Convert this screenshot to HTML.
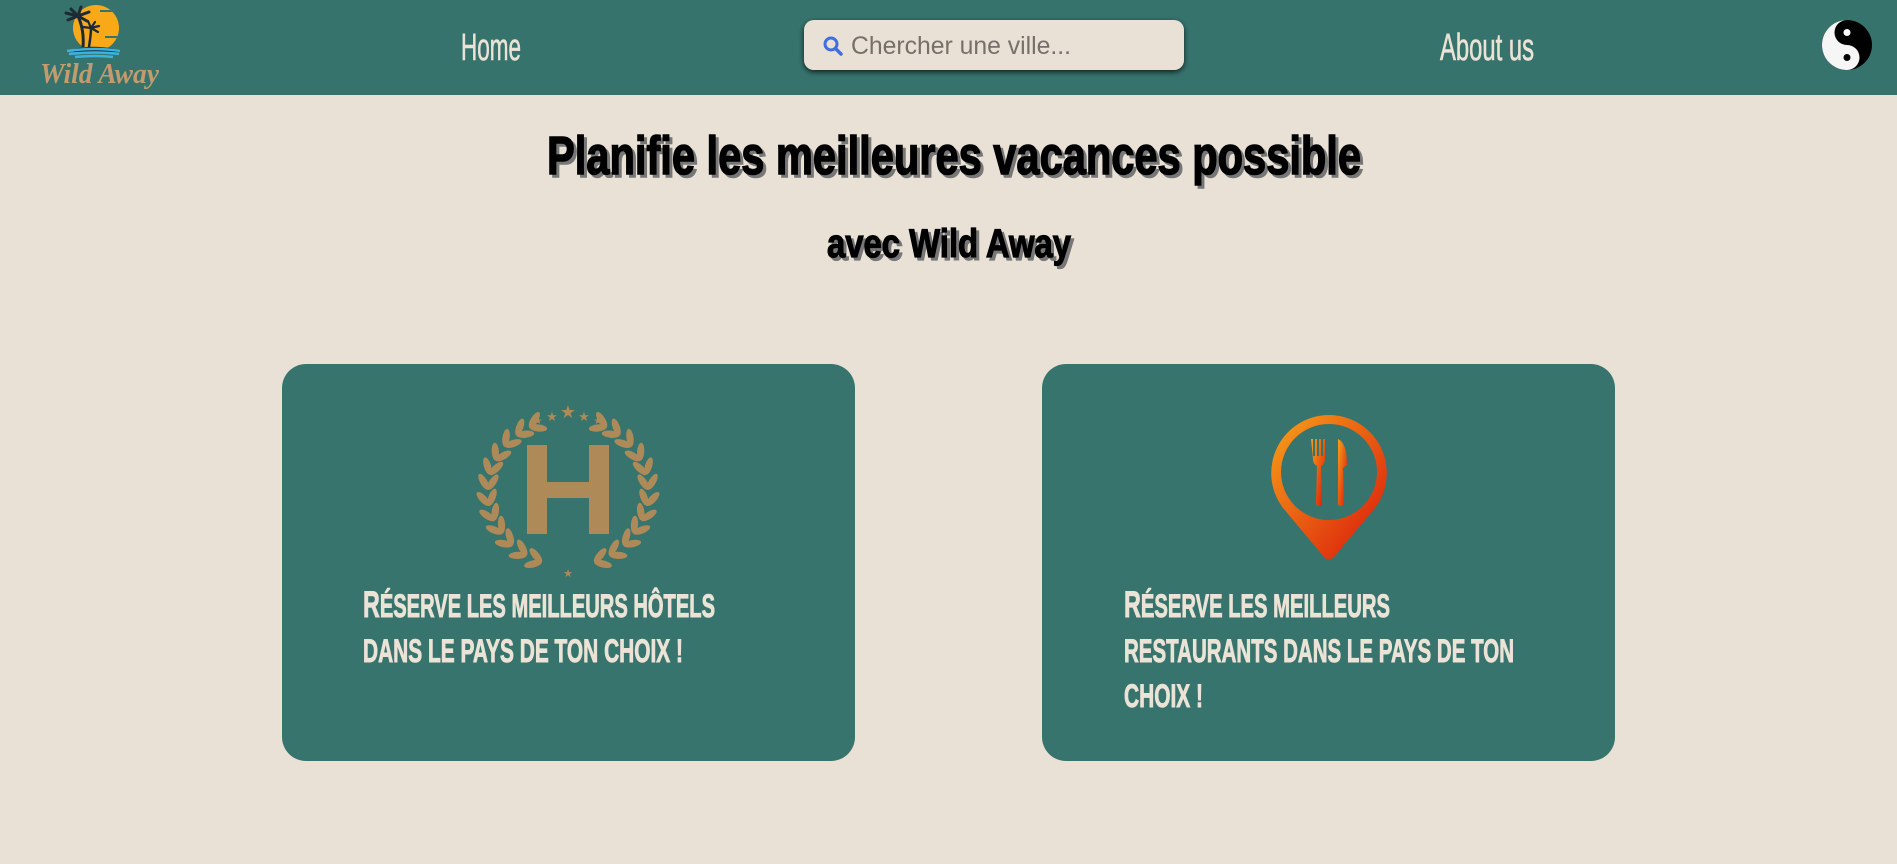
<!DOCTYPE html>
<html><head><meta charset="utf-8">
<style>
html,body{margin:0;padding:0;width:1897px;height:864px;overflow:hidden;background:#e9e1d5;}
svg{display:block}
</style></head>
<body>
<svg width="1897" height="864" viewBox="0 0 1897 864" xmlns="http://www.w3.org/2000/svg">
<defs>
<linearGradient id="pg" x1="0" y1="0" x2="1" y2="1">
<stop offset="0" stop-color="#f7a21a"/><stop offset="1" stop-color="#d9140a"/>
</linearGradient>
<filter id="sh" x="-20%" y="-50%" width="140%" height="200%"><feDropShadow dx="0" dy="2" stdDeviation="3" flood-color="#000" flood-opacity="0.75"/></filter>
<clipPath id="sun"><circle cx="96" cy="28" r="23"/></clipPath>
<g id="v"><ellipse cx="-7" cy="-4.5" rx="9" ry="3.6" transform="rotate(32 -7 -4.5)"/><ellipse cx="-7" cy="4.5" rx="9" ry="3.6" transform="rotate(-32 -7 4.5)"/></g>
</defs>
<rect width="1897" height="864" fill="#e9e1d5"/>
<!-- header -->
<rect width="1897" height="95" fill="#37736d"/>
<!-- logo -->
<circle cx="96" cy="28" r="23" fill="#f8a917"/>
<g clip-path="url(#sun)" fill="#37736d"><rect x="100" y="10" width="30" height="2"/><rect x="105" y="36" width="25" height="2"/></g>
<path d="M83 47 C84 35 82 25 78 16" stroke="#1d2a33" stroke-width="3" fill="none"/>
<path d="M78 16 l-12 -3 M78 16 l-10 4 M78 16 l3 -9 M78 16 l11 -4 M78 16 l9 5 M78 16 l-7 -7" stroke="#1d2a33" stroke-width="3" stroke-linecap="round"/>
<path d="M89 47 C90 40 91 34 91 28" stroke="#1d2a33" stroke-width="2.5" fill="none"/>
<path d="M91 28 l-8 -1 M91 28 l8 -2 M91 28 l-3 -7 M91 28 l4 -6 M91 28 l7 4" stroke="#1d2a33" stroke-width="2.2" stroke-linecap="round"/>
<path d="M74 49 Q95 44 120 50 L120 52 L74 52 Z" fill="#1d2a33"/>
<path d="M67 51 Q96 47 120 51 M69 54 Q96 51 119 54 M75 57 Q95 55 113 57" stroke="#3bb3e0" stroke-width="2.4" fill="none"/>
<text x="40" y="83" font-family="Liberation Serif, serif" font-style="italic" font-weight="bold" font-size="28" fill="#c29c6e" textLength="119" lengthAdjust="spacingAndGlyphs">Wild Away</text>
<!-- nav -->
<g font-family="Liberation Sans, sans-serif" font-size="38" fill="#ebe3d6" stroke="#ebe3d6" stroke-width="0.6">
<text x="461" y="60" textLength="60" lengthAdjust="spacingAndGlyphs">Home</text>
<text x="1440" y="60" textLength="94" lengthAdjust="spacingAndGlyphs">About us</text>
</g>
<!-- search -->
<rect x="804" y="20" width="380" height="50" rx="10" fill="#e9e1d5" filter="url(#sh)"/>
<circle cx="831" cy="44" r="6" stroke="#3f6fe0" stroke-width="3" fill="none"/>
<path d="M835.5 48.5 L841 54" stroke="#3f6fe0" stroke-width="3.5" stroke-linecap="round"/>
<text x="851" y="54" font-family="Liberation Sans, sans-serif" font-size="25" fill="#76706a" textLength="220" lengthAdjust="spacingAndGlyphs">Chercher une ville...</text>
<!-- yin yang -->
<g transform="translate(1847 45)">
<circle r="25" fill="#000"/>
<path d="M0 -25 A25 25 0 0 0 0 25 A12.5 12.5 0 0 0 0 0 A12.5 12.5 0 0 1 0 -25Z" fill="#f6f6f6"/>
<circle cy="-12.5" r="3.5" fill="#fff"/><circle cy="12.5" r="3.5" fill="#000"/>
</g>
<!-- titles -->
<g font-family="Liberation Sans, sans-serif" font-weight="bold">
<text x="550" y="177" font-size="54" fill="#777" stroke="#777" stroke-width="1.5" textLength="814" lengthAdjust="spacingAndGlyphs">Planifie les meilleures vacances possible</text>
<text x="547" y="174" font-size="54" fill="#000" stroke="#000" stroke-width="1.5" textLength="814" lengthAdjust="spacingAndGlyphs">Planifie les meilleures vacances possible</text>
<text x="830" y="260" font-size="40" fill="#777" stroke="#777" stroke-width="1.2" textLength="244" lengthAdjust="spacingAndGlyphs">avec Wild Away</text>
<text x="827" y="257" font-size="40" fill="#000" stroke="#000" stroke-width="1.2" textLength="244" lengthAdjust="spacingAndGlyphs">avec Wild Away</text>
</g>
<!-- cards -->
<rect x="282" y="364" width="573" height="397" rx="24" fill="#37746e"/>
<rect x="1042" y="364" width="573" height="397" rx="24" fill="#37746e"/>
<!-- hotel icon -->
<g fill="#ae8a58">
<path d="M527 445h20v37h42v-37h20v89h-20v-36h-42v36h-20z"/>
<g id="lf">
<use href="#v" transform="translate(530 427) rotate(154)"/>
<use href="#v" transform="translate(517 435) rotate(142)"/>
<use href="#v" transform="translate(505 446) rotate(130)"/>
<use href="#v" transform="translate(496 460) rotate(118)"/>
<use href="#v" transform="translate(490 474) rotate(105)"/>
<use href="#v" transform="translate(488 489) rotate(92)"/>
<use href="#v" transform="translate(489 505) rotate(79)"/>
<use href="#v" transform="translate(494 520) rotate(66)"/>
<use href="#v" transform="translate(502 533) rotate(54)"/>
<use href="#v" transform="translate(512 545) rotate(42)"/>
<use href="#v" transform="translate(526 555) rotate(30)"/>
<use href="#v" transform="translate(541 562) rotate(19)"/>
</g>
<use href="#lf" transform="translate(1136 0) scale(-1 1)"/>
<text x="568" y="418" font-size="18" text-anchor="middle" font-family="DejaVu Sans, sans-serif">★</text>
<text x="552" y="421" font-size="13" text-anchor="middle" font-family="DejaVu Sans, sans-serif">★</text>
<text x="584" y="421" font-size="13" text-anchor="middle" font-family="DejaVu Sans, sans-serif">★</text>
<text x="538" y="424" font-size="10" text-anchor="middle" font-family="DejaVu Sans, sans-serif">★</text>
<text x="598" y="424" font-size="10" text-anchor="middle" font-family="DejaVu Sans, sans-serif">★</text>
<text x="568" y="577" font-size="11" text-anchor="middle" font-family="DejaVu Sans, sans-serif">★</text>
</g>
<!-- restaurant pin -->
<path d="M1329 415 A58 58 0 0 1 1375 508 L1334 557 Q1329 562 1324 557 L1283 508 A58 58 0 0 1 1329 415Z" fill="url(#pg)"/>
<circle cx="1329" cy="472" r="48" fill="#37746e"/>
<g fill="url(#pg)">
<path d="M1311 439h2v17h2v-17h2v17h2v-17h2v17h2v-17h2v20q0 5 -4 7l1 37q0 3 -3 3t-3 -3l1 -37q-4 -2 -4 -7z"/>
<path d="M1338 439q9 4 9 26l-4 3 1 35q0 3 -3 3t-3 -3z"/>
</g>
<!-- card texts -->
<g font-family="Liberation Sans, sans-serif" font-weight="bold" fill="#ebe3d6" stroke="#ebe3d6" stroke-width="0.9">
<text x="363" y="617" font-size="32" textLength="352" lengthAdjust="spacingAndGlyphs"><tspan font-size="37">R</tspan>ÉSERVE LES MEILLEURS HÔTELS</text>
<text x="363" y="662" font-size="32" textLength="320" lengthAdjust="spacingAndGlyphs">DANS LE PAYS DE TON CHOIX !</text>
<text x="1124" y="617" font-size="32" textLength="266" lengthAdjust="spacingAndGlyphs"><tspan font-size="37">R</tspan>ÉSERVE LES MEILLEURS</text>
<text x="1124" y="662" font-size="32" textLength="390" lengthAdjust="spacingAndGlyphs">RESTAURANTS DANS LE PAYS DE TON</text>
<text x="1124" y="707" font-size="32" textLength="79" lengthAdjust="spacingAndGlyphs">CHOIX !</text>
</g>
</svg>
</body></html>
